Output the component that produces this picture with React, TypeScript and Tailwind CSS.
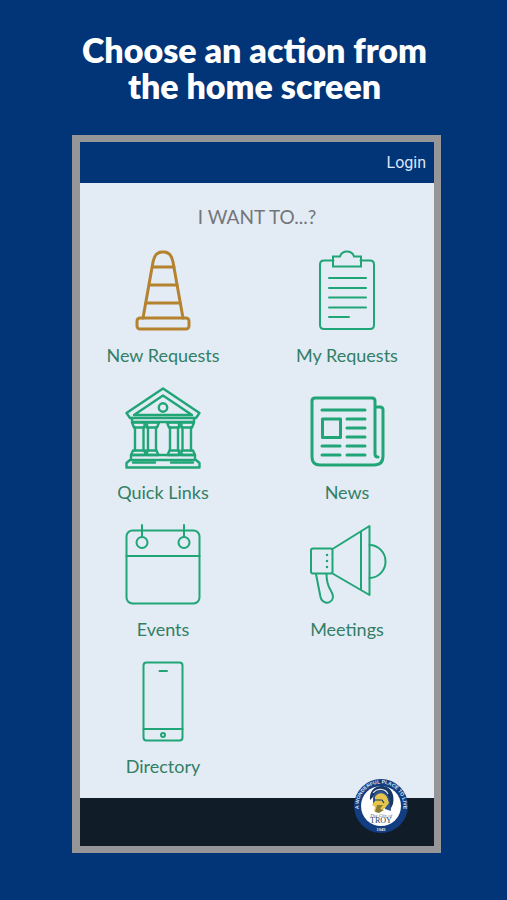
import type { ReactNode } from "react";

type IconProps = {
  children: ReactNode;
  className?: string;
};

function Icon({ children, className = "text-[#20a576]" }: IconProps) {
  return (
    <svg
      viewBox="0 0 80 84"
      aria-hidden="true"
      className={`h-[84px] w-20 ${className}`}
      fill="none"
      stroke="currentColor"
      strokeWidth="2"
      strokeLinecap="round"
      strokeLinejoin="round"
    >
      {children}
    </svg>
  );
}

function ConeIcon() {
  return (
    <Icon className="text-[#b5832f]">
      <g strokeWidth="3">
        <path d="M20 70 30 14Q32 4 39 4h2q7 0 9 10l10 56" />
        <path d="M30 19h21M27 37h27M23 55h34" />
        <rect x="14" y="70" width="52" height="11" rx="3" />
      </g>
    </Icon>
  );
}

function ClipboardIcon() {
  return (
    <Icon>
      <path d="M26.500 12.500H17q-4 0-4 4V77q0 4 4 4h46q4 0 4-4V16.500q0-4-4-4h-9.500" />
      <path strokeLinejoin="miter" d="M26 18.500v-10h7q1.500-5 7-5t7 5h7v10z" />
      <path d="M22 30h37M22 40h37M22 49.500h37M22 59.500h37M22 69h20" />
    </Icon>
  );
}

function BankIcon() {
  return (
    <Icon>
      <g strokeWidth="2.400">
        <path d="M3.500 28 40 3.500 76.500 28l-3.500 5H7zM11 30l29-19.500L69 30z" />
        <circle cx="40" cy="22.500" r="4.200" />
        <path d="M9 33v4h62v-4" />
        <path d="M9 37.500h12.500v5H11zM24 37.500h12l-2 5H24zM44 37.500h12v5H46zM58.500 37.500H71l-2 5H58.500z" />
        <path d="M12 42.500v23M20.500 42.500v23M25 42.500v23M33 42.500v23M47 42.500v23M55 42.500v23M59.500 42.500v23M68 42.500v23" />
        <path d="M10 65.500h12v4.500H8zM24 65.500h9.500l2 4.500H24zM46.500 65.500H56V70H44.500zM58.500 65.500H70l2 4.500H58.500z" />
        <path d="M8 70v5h64v-5H8zM7 75h66l3.500 3v4.500h-73V78z" />
        <path d="M10 77.500h22M48 77.500h22" />
      </g>
    </Icon>
  );
}

function NewspaperIcon() {
  return (
    <Icon>
      <g strokeWidth="3">
        <path d="M68 22h5q3 0 3 3v46q0 9-9 9H13q-8 0-8-8V16q0-3 3-3h57q3 0 3 3v53q0 3 3 3" />
        <path d="M15 25h43M40 34h18M40 43h18M40 52h18M40 61h18M40 70h18M15 61h18M15 70h18" />
        <rect x="15.500" y="34" width="18" height="18.500" />
      </g>
    </Icon>
  );
}

function CalendarIcon() {
  return (
    <Icon>
      <rect x="3.500" y="8.500" width="73" height="73" rx="6" />
      <path d="M3.500 34h73M19 3v12M61 3v12" />
      <circle cx="19" cy="20.500" r="5.500" />
      <circle cx="61" cy="20.500" r="5.500" />
    </Icon>
  );
}

function MegaphoneIcon() {
  return (
    <Icon>
      <rect x="4" y="26.500" width="21.500" height="25" rx="2" />
      <path d="M25.500 27 62.500 4v69L25.500 51.500M54 9.500V68" />
      <path d="M62.500 23a16 16.500 0 0 1 0 33" />
      <path d="M9 52l4.500 23c1.500 6 8 7.500 11.500 3 2-3 1-6-1.500-10-3-5-4-9-4-16" />
      <path strokeWidth="2.500" d="M20 33v.1M20 39v.1M20 45v.1" />
    </Icon>
  );
}

function PhoneIcon() {
  return (
    <Icon>
      <rect x="20.500" y="3.500" width="39" height="78" rx="3" />
      <path d="M20.500 70h39M36.500 12h7.500" />
      <circle cx="40" cy="76" r="2" />
    </Icon>
  );
}

function TroySeal() {
  return (
    <svg viewBox="0 0 56 56" role="img" aria-label="The City of Troy" className="size-14">
      <circle cx="28" cy="28" r="27" fill="#123d80" />
      <circle cx="28" cy="28" r="20" fill="#ffffff" />
      <path id="seal-top" d="M8.500 39.300A22.500 22.500 0 1 1 47.500 39.300" fill="none" />
      <text fill="#dfe7f3" className="font-['Liberation_Sans',sans-serif] text-[5px] font-bold">
        <textPath href="#seal-top" startOffset="50%" textAnchor="middle">
          A WONDERFUL PLACE TO LIVE
        </textPath>
      </text>
      {/* helmet: crest, shell, face, visor */}
      <path d="M17 22C16 13 22 7 30 8c8 1 12 8 10 18l-3 6-3-12c-2-7-11-8-14-1z" fill="#173766" />
      <path d="M20 20c1-6 6-9 11-6 4 2 6 7 6 12l1 7-6-2-1-6-6-2-5 4z" fill="#2b5490" />
      <path d="M22 19c3-5 9-5 12 0l2 6-4 5-6 4-5-1 1-4-3-2 3-4z" fill="#e7c44c" />
      <path d="M24 27h6l-3 4 4 1-5 3-4-1 1-3z" fill="#8b7a35" />
      <path d="M20 15c4-5 12-5 15 1" fill="none" stroke="#dce3ea" strokeWidth="1.200" />
      <path d="M21 22h8l2 3" fill="none" stroke="#173766" strokeWidth="1.200" />
      <text x="28" y="39" textAnchor="middle" fill="#59677d" className="font-['Liberation_Serif',serif] text-[5px] italic">
        The City of
      </text>
      <text x="28" y="45" textAnchor="middle" fill="#263c60" className="font-['Liberation_Serif',serif] text-[8px]">
        TROY
      </text>
      <text x="28" y="53" textAnchor="middle" fill="#dfe7f3" className="font-['Liberation_Sans',sans-serif] text-[4px] font-bold">
        1945
      </text>
    </svg>
  );
}

const actions = [
  { label: "New Requests", icon: <ConeIcon /> },
  { label: "My Requests", icon: <ClipboardIcon /> },
  { label: "Quick Links", icon: <BankIcon /> },
  { label: "News", icon: <NewspaperIcon /> },
  { label: "Events", icon: <CalendarIcon /> },
  { label: "Meetings", icon: <MegaphoneIcon /> },
  { label: "Directory", icon: <PhoneIcon /> },
];

export default function App() {
  return (
    <main className="flex min-h-screen flex-col bg-[#023578] pt-8 pr-[66px] pb-[47px] pl-[72px] font-['Lato',sans-serif]">
      <h1 className="pr-1 text-center text-[34px] leading-9 font-extrabold whitespace-nowrap text-white">
        Choose an action from
        <br />
        the home screen
      </h1>

      <section className="mt-[31px] flex grow flex-col border-[7px] border-l-8 border-[#969699] bg-[#e3ebf5]">
        <header className="flex h-[41px] items-center justify-end bg-[#023578] px-2">
          <button type="button" className="font-['Roboto',sans-serif] text-base text-[#dce7f8]">
            Login
          </button>
        </header>

        <h2 className="mt-5 text-center text-[19px] leading-7 text-[#737679]">I WANT TO...?</h2>

        <nav className="mt-[17px] grid grid-cols-2 gap-x-[18px] gap-y-[18px] pr-1 pb-5">
          {actions.map(({ label, icon }) => (
            <a key={label} href="#" className="flex flex-col items-center gap-[11px] text-lg leading-6 text-[#327f65]">
              {icon}
              <span>{label}</span>
            </a>
          ))}
        </nav>

        <footer className="relative mt-auto h-12 bg-[#101c27]">
          <div className="absolute right-[25px] bottom-3">
            <TroySeal />
          </div>
        </footer>
      </section>
    </main>
  );
}
